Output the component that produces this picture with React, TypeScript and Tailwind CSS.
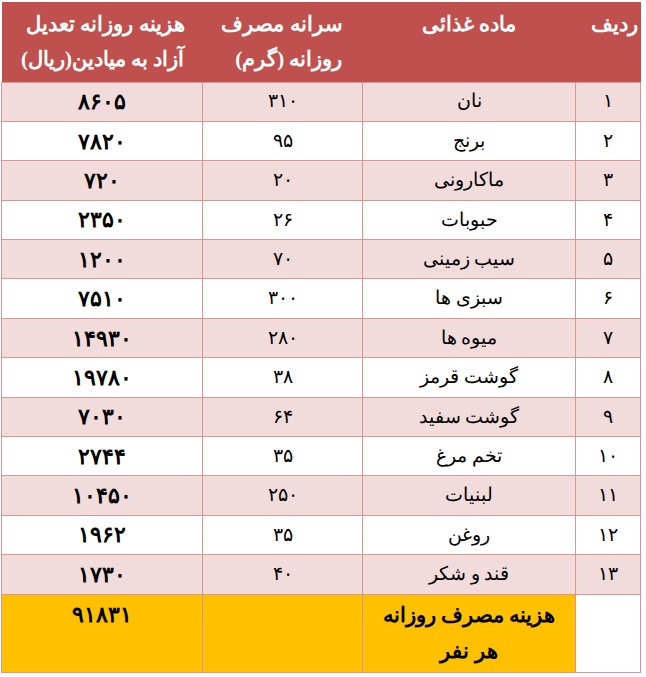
const rows: [string, string, string, string][] = [
  ['۱', 'نان', '۳۱۰', '۸۶۰۵'],
  ['۲', 'برنج', '۹۵', '۷۸۲۰'],
  ['۳', 'ماکارونی', '۲۰', '۷۲۰'],
  ['۴', 'حبوبات', '۲۶', '۲۳۵۰'],
  ['۵', 'سیب زمینی', '۷۰', '۱۲۰۰'],
  ['۶', 'سبزی ها', '۳۰۰', '۷۵۱۰'],
  ['۷', 'میوه ها', '۲۸۰', '۱۴۹۳۰'],
  ['۸', 'گوشت قرمز', '۳۸', '۱۹۷۸۰'],
  ['۹', 'گوشت سفید', '۶۴', '۷۰۳۰'],
  ['۱۰', 'تخم مرغ', '۳۵', '۲۷۴۴'],
  ['۱۱', 'لبنیات', '۲۵۰', '۱۰۴۵۰'],
  ['۱۲', 'روغن', '۳۵', '۱۹۶۲'],
  ['۱۳', 'قند و شکر', '۴۰', '۱۷۳۰'],
]

const cell = 'border border-[#d99694] text-center align-middle p-0'

export default function App() {
  return (
    <div className="bg-white w-[646px] h-[677px] pt-[2px] pl-[1px]">
      <table
        dir="rtl"
        className="border-collapse w-[639px] table-fixed text-black"
        style={{ fontFamily: '"Liberation Serif", "DejaVu Serif", serif' }}
      >
        <colgroup>
          <col className="w-[65px]" />
          <col className="w-[213px]" />
          <col className="w-[160px]" />
          <col className="w-[201px]" />
        </colgroup>
        <thead>
          <tr className="h-[80px] bg-[#c0504d] text-white font-bold text-[21px] leading-[35px]">
            <th className="align-top text-right pr-[3px] pt-[5px] font-bold">ردیف</th>
            <th className="align-top text-center pt-[5px] font-bold">ماده غذائی</th>
            <th className="align-top text-right pr-[20px] pt-[5px] font-bold">
              سرانه مصرف
              <br />
              روزانه (گرم)
            </th>
            <th className="align-top text-right pr-[18px] pt-[5px] font-bold">
              هزینه روزانه تعدیل
              <br />
              آزاد به میادین(ریال)
            </th>
          </tr>
        </thead>
        <tbody className="text-[19px]">
          {rows.map(([n, name, grams, cost], i) => (
            <tr key={n} className={i % 2 === 0 ? 'h-[39.4px] bg-[#f2dcdb]' : 'h-[39.4px] bg-white'}>
              <td className={cell}>{n}</td>
              <td className={cell}>{name}</td>
              <td className={cell}>{grams}</td>
              <td className={`${cell} font-bold text-[22px]`}>{cost}</td>
            </tr>
          ))}
          <tr className="h-[78px] font-bold text-[21px] leading-[36px]">
            <td className={`${cell} bg-white`}></td>
            <td className={`${cell} bg-[#ffc000] align-top pt-[2px]`}>
              هزینه مصرف روزانه
              <br />
              هر نفر
            </td>
            <td className={`${cell} bg-[#ffc000]`}></td>
            <td className={`${cell} bg-[#ffc000] align-top pt-[2px] text-[22px]`}>۹۱۸۳۱</td>
          </tr>
        </tbody>
      </table>
    </div>
  )
}
